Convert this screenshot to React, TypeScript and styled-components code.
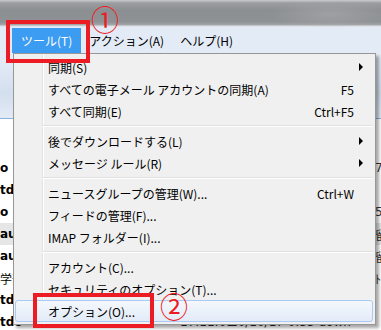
import React from 'react';
import styled, { createGlobalStyle } from 'styled-components';

const GlobalStyle = createGlobalStyle`
    html, body {
        margin: 0;
        padding: 0;
        background: #fff;
    }
`;

const jp = `"Noto Sans CJK JP", "DejaVu Sans", sans-serif`;

type MenuEntry =
    | { kind: 'item'; label: string; shortcut?: string; sub?: boolean; active?: boolean }
    | { kind: 'sep' };

const menuEntries: MenuEntry[] = [
    { kind: 'item', label: '同期(S)', sub: true },
    { kind: 'item', label: 'すべての電子メール アカウントの同期(A)', shortcut: 'F5' },
    { kind: 'item', label: 'すべて同期(E)', shortcut: 'Ctrl+F5' },
    { kind: 'sep' },
    { kind: 'item', label: '後でダウンロードする(L)', sub: true },
    { kind: 'item', label: 'メッセージ ルール(R)', sub: true },
    { kind: 'sep' },
    { kind: 'item', label: 'ニュースグループの管理(W)...', shortcut: 'Ctrl+W' },
    { kind: 'item', label: 'フィードの管理(F)...' },
    { kind: 'item', label: 'IMAP フォルダー(I)...' },
    { kind: 'sep' },
    { kind: 'item', label: 'アカウント(C)...' },
    { kind: 'item', label: 'セキュリティのオプション(T)...' },
    { kind: 'item', label: 'オプション(O)...', active: true },
];

// rows of the message list behind the menu
const bgRows = [
    { left: '', right: '', bold: false, shade: false },
    { left: 'o', right: '7:', bold: true, shade: false },
    { left: 'tdo', right: '', bold: true, shade: false },
    { left: 'o', right: '5:', bold: true, shade: false },
    { left: 'au', right: '留', bold: true, shade: true },
    { left: 'au', right: '留', bold: true, shade: false },
    { left: '学部', right: 'ﾄ', bold: false, shade: false },
    { left: 'tdo', right: '', bold: true, shade: false },
    { left: 'tdo', right: '', bold: true, shade: false, time: '17:11:01', date: '10/10/17 0:53 down' },
];

export default function App() {
    return (
        <>
            <GlobalStyle />
            <Page>
                <TitleBar />
                <MenuBar>
                    <BarItem $active>ツール(T)</BarItem>
                    <BarItem>アクション(A)</BarItem>
                    <BarItem>ヘルプ(H)</BarItem>
                </MenuBar>
                <ListPane>
                    <PaneHeader />
                    {bgRows.map((r, i) => (
                        <BgRow key={i} $shade={r.shade}>
                            <BgLeft $bold={r.bold}>{r.left}</BgLeft>
                            <BgTime>{r.time}</BgTime>
                            <BgDate>{r.date}</BgDate>
                            <BgRight>{r.right}</BgRight>
                        </BgRow>
                    ))}
                </ListPane>

                <Dropdown>
                    {menuEntries.map((e, i) =>
                        e.kind === 'sep' ? (
                            <Separator key={i} />
                        ) : (
                            <MenuItem key={i} $active={e.active}>
                                <ItemLabel>{e.label}</ItemLabel>
                                <Shortcut>{e.shortcut}</Shortcut>
                                <ArrowCell>{e.sub && <Arrow />}</ArrowCell>
                            </MenuItem>
                        ),
                    )}
                </Dropdown>

                <RedBox style={{ left: 6, top: 20, width: 84, height: 43 }} />
                <RedBox style={{ left: 33, top: 293, width: 121, height: 35 }} />
                <Marker style={{ left: 91, top: 5 }}>①</Marker>
                <Marker style={{ left: 160, top: 292 }}>②</Marker>
            </Page>
        </>
    );
}

const Page = styled.div`
    position: relative;
    width: 381px;
    height: 330px;
    overflow: hidden;
    font-family: ${jp};
    font-size: 12px;
    color: #000;
    display: flex;
    flex-direction: column;
`;

const TitleBar = styled.div`
    height: 27px;
    flex: none;
    background:
        radial-gradient(ellipse 60px 14px at 330px 14px, rgba(170, 172, 175, 0.6), transparent),
        linear-gradient(#c9cbcd 0, #9b9ea1 3px, #8c8f92 10px, #8f9295 22px, #a4a7aa 25px, #dfe3e8 26px);
`;

const MenuBar = styled.div`
    height: 26px;
    flex: none;
    display: flex;
    align-items: stretch;
    padding-left: 12px;
    background: #e3ebf7;
`;

const BarItem = styled.div<{ $active?: boolean }>`
    display: flex;
    align-items: center;
    padding: 0 ${({ $active }) => ($active ? '9px' : '8px')};
    margin-top: 1px;
    background: ${({ $active }) => ($active ? '#3b9cf1' : 'transparent')};
    color: ${({ $active }) => ($active ? '#fff' : '#000')};
    line-height: 1;
`;

const ListPane = styled.div`
    flex: 1;
    display: flex;
    flex-direction: column;
    background: #fff;
`;

const PaneHeader = styled.div`
    height: 65px;
    flex: none;
    background: linear-gradient(#e6edf7 0, #dbe5f2 24px, #d3dfee 40px, #e2eaf5 64px);
    border-bottom: 1px solid #8db2de;
    margin-bottom: 16px;
`;

const BgRow = styled.div<{ $shade: boolean }>`
    height: 22px;
    flex: none;
    display: grid;
    grid-template-columns: 180px 50px 145px 1fr;
    align-items: center;
    background: ${({ $shade }) => ($shade ? '#e6e6e6' : 'transparent')};
    font-family: "DejaVu Sans", ${jp};
    font-size: 12px;
    white-space: nowrap;
    overflow: hidden;
`;

const BgLeft = styled.span<{ $bold: boolean }>`
    font-weight: ${({ $bold }) => ($bold ? 700 : 400)};
`;

const BgTime = styled.span`
    color: #222;
`;

const BgDate = styled.span`
    color: #222;
`;

const BgRight = styled.span`
    color: #333;
`;

const Dropdown = styled.div`
    position: absolute;
    left: 13px;
    top: 53px;
    width: 358px;
    padding: 2px 2px 2px 1px;
    border: 1px solid #979797;
    background-color: #f0f0f0;
    background-image: linear-gradient(
        to right,
        transparent 28px,
        #e2e3e3 28px,
        #e2e3e3 29px,
        #ffffff 29px,
        #ffffff 30px,
        transparent 30px
    );
    box-shadow: 3px 3px 3px rgba(0, 0, 0, 0.35);
    display: flex;
    flex-direction: column;
`;

const MenuItem = styled.div<{ $active?: boolean }>`
    height: 22px;
    box-sizing: border-box;
    display: grid;
    grid-template-columns: 1fr auto 18px;
    align-items: center;
    padding-left: 33px;
    border: 1px solid ${({ $active }) => ($active ? '#a9cbf3' : 'transparent')};
    border-radius: 3px;
    background: ${({ $active }) =>
        $active ? 'linear-gradient(#f4f8fc, #e2ebf8)' : 'transparent'};
    white-space: nowrap;
`;

const ItemLabel = styled.span`
    margin-left: -1px;
`;

const Shortcut = styled.span`
    text-align: right;
`;

const ArrowCell = styled.span`
    display: flex;
    align-items: center;
    padding-left: 5px;
`;

const Arrow = styled.span`
    width: 0;
    height: 0;
    border-top: 4px solid transparent;
    border-bottom: 4px solid transparent;
    border-left: 4px solid #000;
`;

const Separator = styled.div`
    height: 8px;
    flex: none;
    margin-left: 27px;
    background: linear-gradient(
        transparent 3px,
        #e0e0e0 3px,
        #e0e0e0 4px,
        #ffffff 4px,
        #ffffff 5px,
        transparent 5px
    );
`;

const RedBox = styled.div`
    position: absolute;
    box-sizing: border-box;
    border: 4px solid #ec1c24;
`;

const Marker = styled.span`
    position: absolute;
    font-family: ${jp};
    font-size: 28px;
    line-height: 1;
    color: #ec1c24;
`;
